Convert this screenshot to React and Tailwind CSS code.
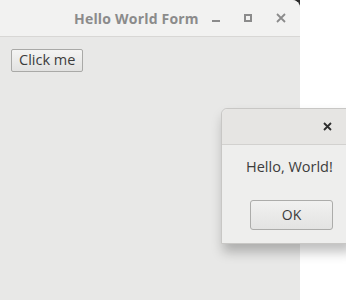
import React from "react";

function App() {
  return (
    <div className="relative w-[346px] h-[300px] bg-white overflow-hidden" style={{ fontFamily: "'Open Sans', 'DejaVu Sans', sans-serif" }}>
      {/* dark desktop corner peeking behind the rounded window */}
      <div className="absolute left-[292px] top-0 w-[8px] h-[8px] bg-[#2b2b2b]" />

      {/* Main window */}
      <div className="relative w-[300px] h-[300px] flex flex-col bg-[#e8e8e7] rounded-tr-[8px]">
        {/* Title bar */}
        <div className="h-[37px] flex items-center bg-[#f2f2f1] border-b border-[#d8d7d5] rounded-tr-[8px]">
          <div className="flex-1 pl-[74px] text-[14px] font-bold text-[#8b8b8b] tracking-[0.2px]">Hello World Form</div>
          <div className="flex items-center gap-[24px] pr-[14px]">
            <span className="w-[8px] h-[2px] bg-[#8b8b8b] mt-[6px]" />
            <span className="w-[8px] h-[8px] border-2 border-[#8b8b8b]" />
            <svg width="10" height="10" viewBox="0 0 10 10">
              <path d="M1 1 L9 9 M9 1 L1 9" stroke="#8b8b8b" strokeWidth="1.8" />
            </svg>
          </div>
        </div>
        {/* Content */}
        <div className="flex-1 flex items-start pt-[12px] pl-[11px]">
          <button className="h-[23px] px-[7px] text-[14.5px] text-[#3c3c3c] leading-none border border-[#a9a9a7] rounded-[2px] bg-gradient-to-b from-[#f4f4f3] to-[#e2e2e1]">
            Click me
          </button>
        </div>
      </div>

      {/* Dialog window */}
      <div className="absolute left-[221px] top-[108px] w-[130px] h-[136px] flex flex-col bg-[#eeeeed] rounded-tl-[6px] border border-[#c8c7c5] shadow-[2px_8px_12px_rgba(0,0,0,0.25)]">
        <div className="h-[36px] flex items-center justify-end pr-[18px] bg-[#e6e5e3] border-b border-[#d2d1cf] rounded-tl-[6px]">
          <svg width="9" height="9" viewBox="0 0 9 9">
            <path d="M1 1 L8 8 M8 1 L1 8" stroke="#2e2e2e" strokeWidth="1.8" />
          </svg>
        </div>
        <div className="pl-[24px] pt-[11px] text-[14.5px] text-[#3c3c3c]">Hello, World!</div>
        <div className="pl-[28px] pt-[22px]">
          <button className="w-[83px] h-[30px] text-[14px] text-[#3c3c3c] border border-[#acacaa] rounded-[3px] bg-gradient-to-b from-[#f1f1f0] to-[#e3e3e2]">
            OK
          </button>
        </div>
      </div>
    </div>
  );
}

export default App;
